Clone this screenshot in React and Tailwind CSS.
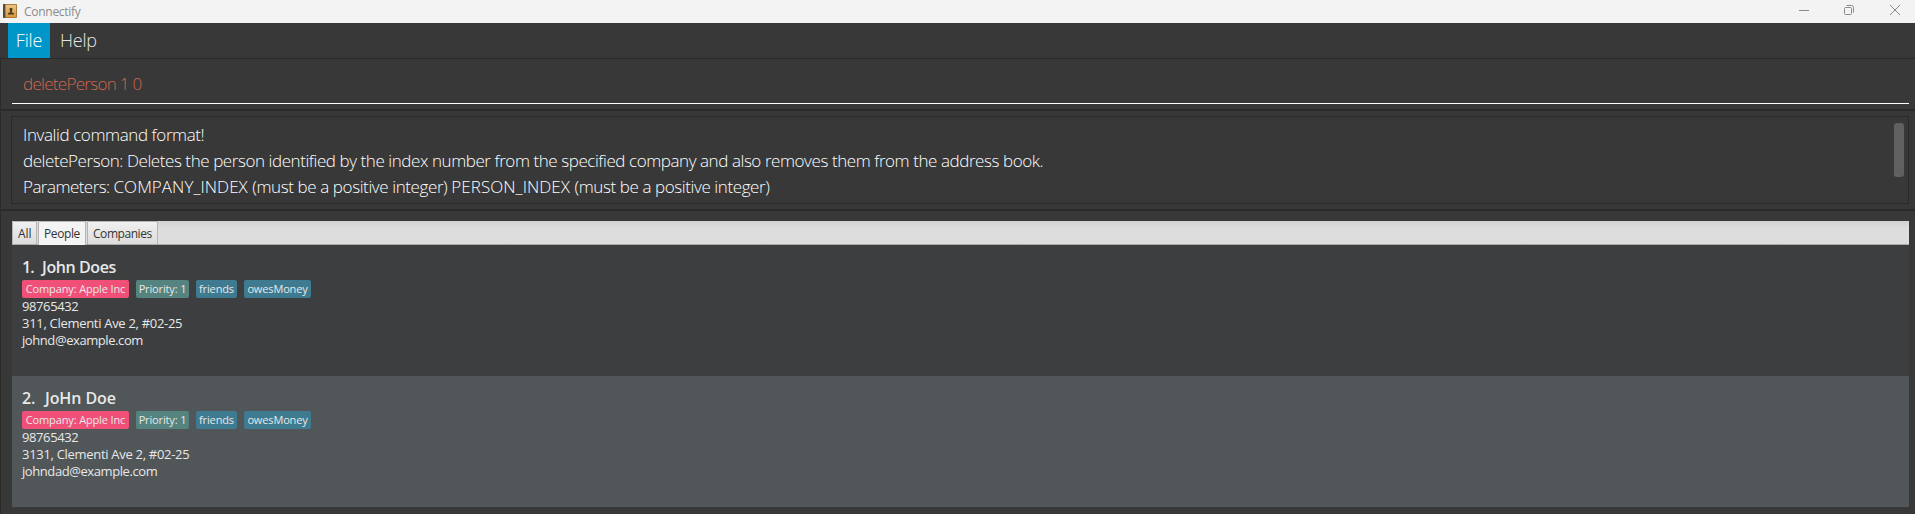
const people = [
  { id: 1, name: "John Does", phone: "98765432", address: "311, Clementi Ave 2, #02-25", email: "johnd@example.com", row: "bg-[#3c3e3f]", number: "w-[20px] tracking-[-0.8px]", title: "tracking-[-0.4px]" },
  { id: 2, name: "JoHn Doe", phone: "98765432", address: "3131, Clementi Ave 2, #02-25", email: "johndad@example.com", row: "bg-[#515658]", number: "w-[23px] tracking-[-0.2px]", title: "tracking-[-0.1px]" },
];

const tags = [
  { label: "Company: Apple Inc", style: "w-[107px] bg-[#f05078]" },
  { label: "Priority: 1", style: "w-[53px] bg-[#558480]" },
  { label: "friends", style: "w-[41px] bg-[#3e7b91]" },
  { label: "owesMoney", style: "w-[67px] bg-[#3e7b91]" },
];

function AppIcon() {
  return (
    <svg width="14" height="14" viewBox="0 0 14 14" className="mt-[4px] shrink-0">
      <defs>
        <linearGradient id="cover" x1="0" y1="0" x2="0" y2="1">
          <stop offset="0" stopColor="#ecc283" />
          <stop offset="1" stopColor="#d79a3c" />
        </linearGradient>
      </defs>
      <rect width="14" height="14" rx="1" fill="#a87a3c" />
      <rect width="2.5" height="14" rx="1" fill="#54483c" />
      <rect x="2.5" y="1" width="10.5" height="12" fill="url(#cover)" />
      <path d="M6.700 4h2.600v2.600l-.5 1.200v.8l2.200.5v1.400H5V9.100l2.200-.5v-.8l-.5-1.200z" fill="#4b3a26" />
    </svg>
  );
}

function TitleBar() {
  return (
    <header className="flex h-[23px] items-start bg-[#f3f3f3] pl-[3px] pr-[15px] text-[#8c8c8c]">
      <AppIcon />
      <span className="ml-[7px] text-[12px] leading-[23px] tracking-[-0.28px]">Connectify</span>
      <svg width="10" height="10" className="ml-auto mt-[5px]" fill="none" stroke="#8a8a8a">
        <path d="M0 5.5h10" />
      </svg>
      <svg width="10" height="10" className="ml-[35px] mt-[5px]" fill="none" stroke="#8a8a8a">
        <rect x="0.5" y="2.5" width="7" height="7" rx="1" />
        <path d="M2.5.5H7.500a2 2 0 0 1 2 2V7.500" />
      </svg>
      <svg width="10" height="10" className="ml-[36px] mt-[5px]" fill="none" stroke="#8a8a8a">
        <path d="M0 0l10 10M10 0L0 10" />
      </svg>
    </header>
  );
}

function PersonRow({ person }) {
  return (
    <li className={`h-[131px] pl-[10px] pt-[11px] text-[#e8e8e8] ${person.row}`}>
      <div className="flex h-[22px] text-[16px] font-semibold leading-[22px]">
        <span className={person.number}>{person.id}.</span>
        <span className={person.title}>{person.name}</span>
      </div>
      <div className="mt-[2px] flex h-[18px] gap-[7px]">
        {tags.map((tag) => (
          <span key={tag.label} className={`flex items-center justify-center whitespace-nowrap rounded-[2px] text-[11px] leading-[18px] tracking-[-0.14px] ${tag.style}`}>
            {tag.label}
          </span>
        ))}
      </div>
      <div className="text-[13px] leading-[17px]">
        <p className="tracking-[-0.4px]">{person.phone}</p>
        <p className="tracking-[-0.3px]">{person.address}</p>
        <p className="tracking-[-0.42px]">{person.email}</p>
      </div>
    </li>
  );
}

export default function App() {
  return (
    <div className="flex h-[514px] w-[1915px] flex-col overflow-hidden bg-[#383838] font-['Open_Sans','Noto_Sans',sans-serif]">
      <TitleBar />
      <nav className="flex h-[35px] pl-[8px] text-[18px] font-light leading-[35px] text-[#e6e6e6]">
        <span className="w-[42px] bg-[#0096c9] text-center tracking-[-0.2px] text-white">File</span>
        <span className="ml-[10px] tracking-[-0.2px]">Help</span>
      </nav>
      <section className="h-[52px] border border-r-0 border-[#2a2a2a] pl-[11px] pr-[6px]">
        <div className="h-[45px] border-b border-white pl-[11px] text-[17px] font-light leading-[49px] tracking-[-0.7px] text-[#d06651]">
          deletePerson 1 0
        </div>
      </section>
      <section className="h-[100px] border border-r-0 border-[#2a2a2a] pl-[10px] pr-[6px] pt-[5px]">
        <div className="flex h-[88px] justify-between border border-[#2a2a2a] pl-[11px] pr-[4px] pt-[5px]">
          <div className="whitespace-nowrap text-[17px] font-light leading-[26px] text-white">
            <p className="tracking-[-0.4px]">Invalid command format!</p>
            <p className="tracking-[-0.43px]">deletePerson: Deletes the person identified by the index number from the specified company and also removes them from the address book.</p>
            <p className="tracking-[-0.4px]">
              <span className="tracking-[-0.54px]">Parameters: </span>
              <span className="tracking-[0.05px]">COMPANY_INDEX </span>
              (must be a positive integer){" "}
              <span className="tracking-[0.05px]">PERSON_INDEX </span>
              (must be a positive integer)
            </p>
          </div>
          <div className="mt-[1px] h-[54px] w-[10px] rounded-[3px] bg-[#606060]" />
        </div>
      </section>
      <main className="flex-1 border-l border-t border-[#2a2a2a] pl-[11px] pr-[6px] pt-[10px]">
        <div className="flex h-[24px] border-b border-[#a9a9a9] bg-linear-to-b from-[#d2d2d2] to-[#dddddd] to-30% text-[12px] leading-[23px] text-[#333]">
          <span className="h-[23px] w-[25px] rounded-t-[2px] border-x border-t border-[#b5b5b5] bg-linear-to-b from-[#f0f0f0] to-[#dcdcdc] pl-[5px] tracking-[-0.1px]">All</span>
          <span className="ml-[1px] h-[24px] w-[48px] rounded-t-[2px] border-x border-t border-[#b5b5b5] bg-[#f4f4f4] pl-[5px] tracking-[-0.4px]">People</span>
          <span className="ml-[1px] h-[23px] w-[71px] rounded-t-[2px] border-x border-t border-[#b5b5b5] bg-linear-to-b from-[#f0f0f0] to-[#dcdcdc] pl-[5px] tracking-[-0.44px]">Companies</span>
        </div>
        <ul>
          {people.map((person) => (
            <PersonRow key={person.id} person={person} />
          ))}
        </ul>
      </main>
    </div>
  );
}
